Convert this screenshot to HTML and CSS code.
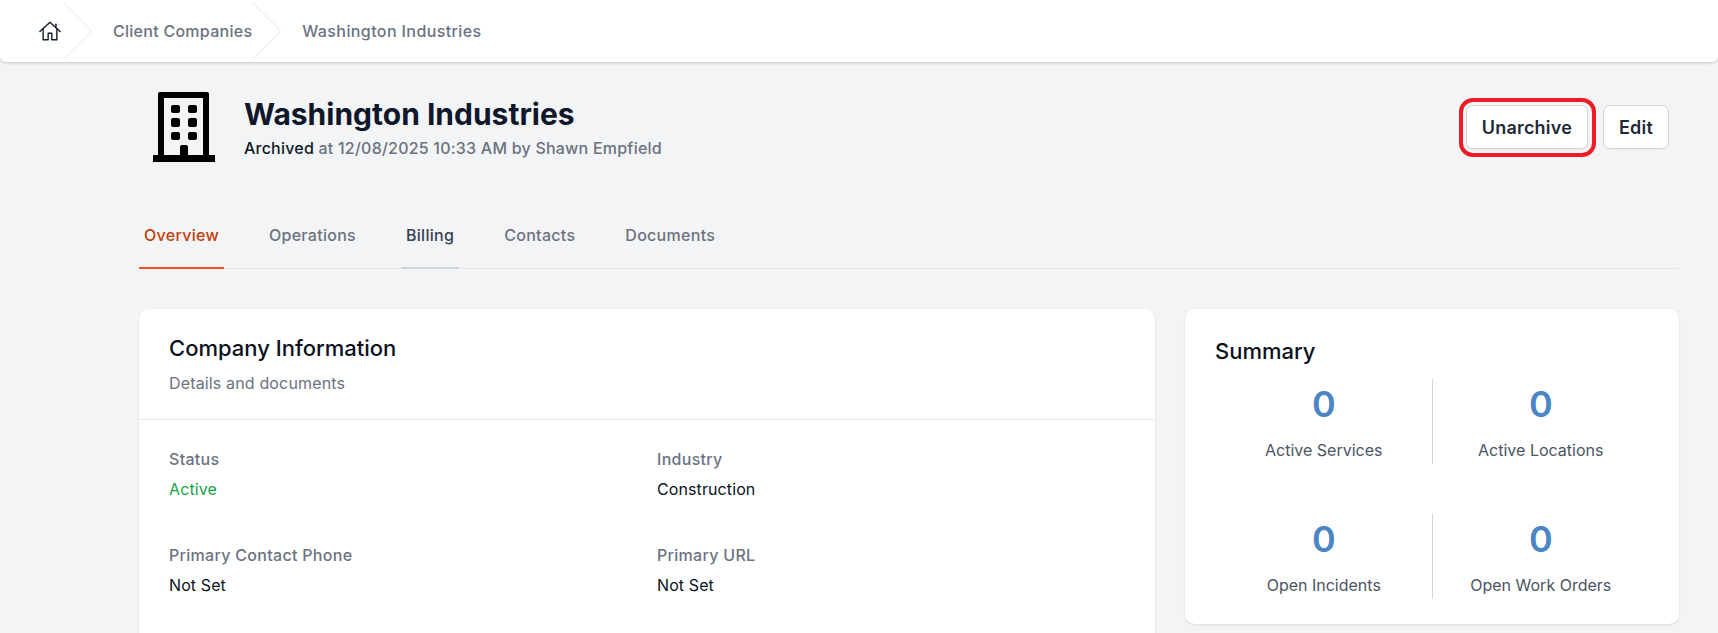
FILE: index.html
```html
<!DOCTYPE html>
<html lang="en">
<head>
<meta charset="utf-8">
<title>Washington Industries</title>
<link rel="stylesheet" href="styles.css">
</head>
<body>
<nav class="crumbs">
  <a class="crumb-home" aria-label="Home">
    <svg class="home-icon" viewBox="0 0 24 24" fill="none" stroke="#111827" stroke-width="1.5" stroke-linejoin="round" stroke-linecap="round"><path d="M1 12.5 12 2.5l11 10"/><path d="M4.5 9.5v12h5.5V14.5h4v7h5.5v-12"/><path d="M18.5 4.5v3"/></svg>
  </a>
  <svg class="chev" viewBox="0 0 28 56" fill="none" stroke="#e5e7eb"><path d="M0 0 27.5 28 0 56"/></svg>
  <a class="crumb">Client Companies</a>
  <svg class="chev" viewBox="0 0 28 56" fill="none" stroke="#e5e7eb"><path d="M0 0 27.5 28 0 56"/></svg>
  <a class="crumb crumb-last">Washington Industries</a>
</nav>
<main class="page">
  <header class="head">
    <svg class="bldg" viewBox="0 0 62 70" fill="#000"><path d="M7 0h47a2 2 0 0 1 2 2v61h6v7H0v-7h5V2a2 2 0 0 1 2-2Zm4 6v57h16V55a2 2 0 0 1 2-2h4a2 2 0 0 1 2 2v8h15V6Z" fill-rule="evenodd"/><rect x="18" y="13" width="9" height="8" rx="2"/><rect x="35" y="13" width="9" height="8" rx="2"/><rect x="18" y="26" width="9" height="9" rx="2"/><rect x="35" y="26" width="9" height="9" rx="2"/><rect x="18" y="40" width="9" height="8" rx="2"/><rect x="35" y="40" width="9" height="8" rx="2"/></svg>
    <div class="head-text">
      <h1>Washington Industries</h1>
      <p><strong>Archived</strong> at 12/08/2025 10:33 AM by Shawn Empfield</p>
    </div>
    <div class="actions">
      <span class="marked"><button class="btn">Unarchive</button><i class="ring"></i></span>
      <button class="btn">Edit</button>
    </div>
  </header>
  <div class="tabs">
    <a class="tab active">Overview</a>
    <a class="tab">Operations</a>
    <a class="tab hover">Billing</a>
    <a class="tab">Contacts</a>
    <a class="tab">Documents</a>
  </div>
  <div class="columns">
    <section class="card info">
      <div class="info-head">
        <h2>Company Information</h2>
        <p>Details and documents</p>
      </div>
      <dl class="fields">
        <div><dt>Status</dt><dd class="ok">Active</dd></div>
        <div><dt>Industry</dt><dd>Construction</dd></div>
        <div><dt>Primary Contact Phone</dt><dd>Not Set</dd></div>
        <div><dt>Primary URL</dt><dd>Not Set</dd></div>
      </dl>
    </section>
    <section class="card summary">
      <h2>Summary</h2>
      <div class="stats">
        <div class="stat"><b>0</b><span>Active Services</span></div>
        <div class="stat"><b>0</b><span>Active Locations</span></div>
        <div class="stat"><b>0</b><span>Open Incidents</span></div>
        <div class="stat"><b>0</b><span>Open Work Orders</span></div>
      </div>
    </section>
  </div>
</main>
</body>
</html>
```
FILE: styles.css
```css
* { box-sizing: border-box; }
html, body { margin: 0; height: 100%; }
body {
  background: #f3f4f6;
  font-family: Inter, "Liberation Sans", sans-serif;
  color: #111827;
  overflow: hidden;
}
.crumbs {
  height: 62px;
  background: #fff;
  border-radius: 0 0 6px 6px;
  box-shadow: 0 1px 3px rgba(0,0,0,.2);
  display: flex;
  align-items: center;
  padding: 0 0 0 39px;
  font-size: 16px;
  font-weight: 500;
  color: #6b7280;
}
.crumb-home { display: flex; width: 25px; }
.home-icon { width: 22px; height: 22px; }
.chev { width: 28px; height: 56px; margin-right: 21px; flex: none; }
.crumb { white-space: nowrap; letter-spacing: .27px; }
.crumb-last { letter-spacing: .4px; }
.crumb + .chev { margin-left: 1px; }
.page { padding: 0 39px 0 139px; }
.head {
  display: flex;
  align-items: flex-start;
  padding-top: 30px;
  height: 146px;
}
.bldg { width: 62px; height: 70px; margin: 0 0 0 14px; flex: none; }
.head-text { margin-left: 29px; }
h1 { margin: 4px 0 0; font-size: 30px; line-height: 36px; font-weight: 700; color: #0f172a; }
.head-text p { margin: 4px 0 0; font-size: 16px; line-height: 24px; font-weight: 500; color: #6b7280; letter-spacing: .22px; }
.head-text strong { font-weight: 500; color: #111827; }
.actions { margin-left: auto; margin-right: 10px; margin-top: 13px; display: flex; align-items: center; gap: 15px; }
.marked { position: relative; display: flex; }
.ring {
  position: absolute;
  inset: -7px -8px -8px -7px;
  border: 4px solid #ed1c24;
  border-radius: 14px;
  pointer-events: none;
}
.btn {
  height: 44px;
  padding: 0 15px;
  background: #fff;
  border: 1px solid #d1d5db;
  border-radius: 7px;
  box-shadow: 0 1px 2px rgba(0,0,0,.05);
  font: 600 18px Inter, "Liberation Sans", sans-serif;
  letter-spacing: .2px;
  color: #1f2937;
}
.tabs {
  display: flex;
  gap: 40px;
  height: 61px;
  border-bottom: 1px solid #e5e7eb;
}
.tab {
  padding: 15px 5px 0;
  height: 61px;
  border-bottom: 2px solid transparent;
  font-size: 16px;
  line-height: 24px;
  font-weight: 500;
  letter-spacing: .29px;
  color: #6b7280;
}
.tab.active { color: #c2410c; border-bottom-color: #f4511e; }
.tab.hover { color: #374151; border-bottom-color: #d1d5db; }
.columns {
  display: grid;
  grid-template-columns: 1016px 494px;
  gap: 30px;
  align-items: start;
  margin-top: 40px;
}
.card {
  background: #fff;
  border-radius: 10px;
  box-shadow: 0 1px 3px rgba(0,0,0,.1);
}
.info { height: 400px; }
.info-head {
  padding: 25px 30px 0;
  height: 111px;
  border-bottom: 1px solid #e5e7eb;
}
h2 { margin: 0; font-size: 22px; line-height: 28px; font-weight: 500; color: #0b1120; }
.info-head p { margin: 9px 0 0; font-size: 16px; line-height: 24px; color: #6b7280; letter-spacing: .15px; }
.fields {
  margin: 0;
  padding: 27px 30px 0;
  display: grid;
  grid-template-columns: 1fr 1fr;
  column-gap: 20px;
  row-gap: 42px;
}
.fields dt { font-size: 16px; line-height: 24px; font-weight: 500; color: #6b7280; letter-spacing: .3px; }
.fields dd { margin: 6px 0 0; font-size: 16px; line-height: 24px; color: #0b1120; letter-spacing: .1px; }
.fields dd.ok { color: #16a34a; }
.summary { padding: 28px 30px 0; height: 315px; }
.stats {
  margin: 14px 0 0 1px;
  display: grid;
  grid-template-columns: 1fr 1fr;
  row-gap: 50px;
}
.stat {
  height: 85px;
  display: flex;
  flex-direction: column;
  align-items: center;
  padding-top: 5px;
}
.stat:nth-child(odd) { border-right: 1px solid #d1d5db; }
.stat b { font-size: 36px; line-height: 40px; font-weight: 600; color: #4a86c5; }
.stat span { margin-top: 14px; font-size: 16px; line-height: 24px; color: #4b5563; }
```
